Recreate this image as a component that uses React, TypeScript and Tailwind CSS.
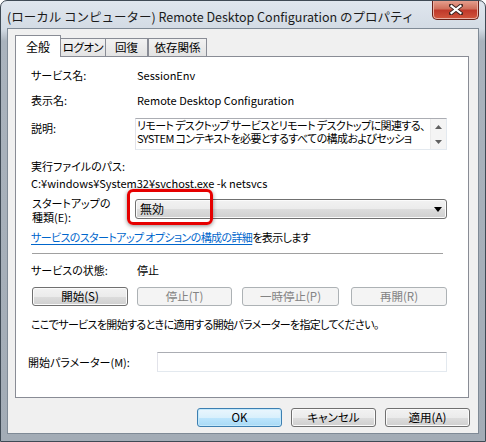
import React from 'react';

// ダイアログ全体のフォント
const jp = "font-['Noto_Sans_CJK_JP','Noto_Sans',sans-serif] [font-feature-settings:'palt']";

function Btn({ label, kind = 'normal', className = '' }: { label: string; kind?: 'normal' | 'disabled' | 'focused'; className?: string }) {
  const look =
    kind === 'disabled'
      ? 'border-[#adb2b5] bg-[#f4f4f4] text-[#838383]'
      : kind === 'focused'
      ? 'border-[#3c7fb1] bg-[linear-gradient(#eaf6fd_0%,#d9f0fc_50%,#bee6fd_50%,#a7d9f5_100%)] shadow-[inset_0_0_0_1px_#c3e8fb] text-black'
      : 'border-[#707070] bg-[linear-gradient(#f2f2f2_0%,#ebebeb_50%,#dddddd_50%,#cfcfcf_100%)] shadow-[inset_0_0_0_1px_#fbfbfb] text-black';
  return (
    <div className={`h-[19px] rounded-[3px] border flex items-center justify-center text-[11.5px] leading-none whitespace-nowrap ${look} ${className}`}>
      {label}
    </div>
  );
}

function Tab({ label, active, w, className = '' }: { label: string; active?: boolean; w: string; className?: string }) {
  if (active) {
    return (
      <div className={`relative z-10 -mb-px h-[22px] ${w} border border-b-0 border-[#898c95] bg-white flex items-center justify-center text-[12px] whitespace-nowrap ${className}`}>
        {label}
      </div>
    );
  }
  return (
    <div className={`h-[18px] ${w} border border-b-0 border-[#898c95] bg-[linear-gradient(#f2f2f2,#e3e3e3)] flex items-center justify-center text-[11.5px] pt-px whitespace-nowrap ${className}`}>
      {label}
    </div>
  );
}

export default function App() {
  return (
    <div className={`w-[486px] h-[442px] border border-[#3f4a55] rounded-t-[7px] bg-[linear-gradient(#dfe6ee_0px,#d3dbe4_28px,#aab3bd_40px,#a3acb6_100%)] flex flex-col overflow-hidden ${jp}`}>
      {/* タイトルバー */}
      <div className="h-[27px] flex items-start shrink-0">
        <div className="pl-[6px] pt-[8px] text-[12.5px] leading-[16px] text-[#1b1b1b] whitespace-nowrap [font-feature-settings:normal]">
          (ローカル コンピューター) Remote Desktop Configuration のプロパティ
        </div>
        <div className="ml-auto mr-[6px] -mt-px w-[47px] h-[20px] rounded-b-[5px] border border-t-0 border-[#6b2219] bg-[linear-gradient(#e8a493_0%,#d0715d_45%,#c0392b_55%,#d2563d_100%)] shadow-[inset_0_0_0_1px_#eab0a4] flex items-center justify-center">
          <svg width="14" height="11" viewBox="0 0 14 11">
            <path d="M2 1.5 L12 9.5 M12 1.5 L2 9.5" stroke="#3d2420" strokeWidth="4" strokeLinecap="square" />
            <path d="M2.5 2 L11.5 9 M11.5 2 L2.5 9" stroke="#ffffff" strokeWidth="2.2" strokeLinecap="square" />
          </svg>
        </div>
      </div>

      {/* クライアント領域 */}
      <div className="mx-[6px] h-[406px] shrink-0 border border-[#7f8a96] bg-[#f0f0f0] flex flex-col text-black">
        {/* タブ */}
        <div className="mt-[6px] h-[21px] pl-[7px] flex items-end">
          <Tab label="全般" active w="w-[46px]" />
          <Tab label="ログオン" w="w-[46px]" className="-ml-px tracking-[-0.5px]" />
          <Tab label="回復" w="w-[43px]" className="-ml-px" />
          <Tab label="依存関係" w="w-[59px]" />
        </div>

        {/* タブの中身 */}
        <div className="ml-[7px] w-[454px] h-[342px] border border-[#898c95] bg-white pl-[15px] flex flex-col text-[11px]">
          <div className="mt-[10px] h-[16px] flex items-center">
            <div className="w-[106px]">サービス名:</div>
            <div>SessionEnv</div>
          </div>
          <div className="mt-[9px] h-[16px] flex items-center">
            <div className="w-[106px]">表示名:</div>
            <div>Remote Desktop Configuration</div>
          </div>
          <div className="mt-[10px] h-[32px] flex">
            <div className="w-[104px] pt-[2px] leading-[16px]">説明:</div>
            <div className="w-[312px] h-[32px] border border-[#abadb3] border-r-[#e3e9ef] border-b-[#e3e9ef] border-l-[#e2e3ea] flex">
              <div className="flex-1 pl-px leading-[13px] whitespace-nowrap tracking-[-0.6px]">
                <div>リモート デスクトップ サービスとリモート デスクトップに関連する、</div>
                <div>SYSTEM コンテキストを必要とするすべての構成およびセッショ</div>
              </div>
              <div className="w-[16px] flex flex-col bg-[#f4f4f4] border-l border-[#eaeaea]">
                <div className="h-[15px] flex items-center justify-center">
                  <svg width="7" height="4" viewBox="0 0 7 4"><path d="M0 4 L3.5 0 L7 4 Z" fill="#606060" /></svg>
                </div>
                <div className="h-[15px] flex items-center justify-center">
                  <svg width="7" height="4" viewBox="0 0 7 4"><path d="M0 0 L3.5 4 L7 0 Z" fill="#606060" /></svg>
                </div>
              </div>
            </div>
          </div>
          <div className="mt-[8px] h-[16px] flex items-center">実行ファイルのパス:</div>
          <div className="mt-px h-[16px] flex items-center">C:¥windows¥System32¥svchost.exe -k netsvcs</div>

          <div className="mt-[5px] h-[28px] flex">
            <div className="w-[104px] leading-[14px] pl-px">
              <div>スタートアップの</div>
              <div>種類(E):</div>
            </div>
            <div className="relative mt-[3px] w-[312px] h-[20px]">
              <div className="w-full h-full rounded-[3px] border border-[#707070] bg-[linear-gradient(#f2f2f2_0%,#ebebeb_50%,#dddddd_50%,#cfcfcf_100%)] shadow-[inset_0_0_0_1px_#fbfbfb] flex items-center pl-[4px] pr-[4px] text-[12px]">
                <span>無効</span>
                <svg className="ml-auto" width="8" height="5" viewBox="0 0 8 5"><path d="M0 0 L8 0 L4 5 Z" fill="#000" /></svg>
              </div>
              {/* 赤い強調枠 */}
              <div className="absolute left-[-8px] top-[-10px] w-[86px] h-[36px] rounded-[6px] border-[3px] border-[#e60000] shadow-[0_1px_4px_rgba(0,0,0,0.45)]" />
            </div>
          </div>

          <div className="mt-[5px] h-[16px] flex items-center whitespace-nowrap tracking-[-0.6px]">
            <span className="text-[#0066cc] underline underline-offset-2">サービスのスタートアップ オプションの構成の詳細</span>
            <span>を表示します</span>
          </div>
          <div className="mt-[8px] ml-px h-px w-[411px] bg-[#a0a0a0]" />
          <div className="mt-[8px] h-[16px] flex items-center">
            <div className="w-[106px]">サービスの状態:</div>
            <div>停止</div>
          </div>
          <div className="mt-[9px] ml-px flex">
            <Btn label="開始(S)" className="w-[96px]" />
            <Btn label="停止(T)" kind="disabled" className="w-[95px] ml-[9px]" />
            <Btn label="一時停止(P)" kind="disabled" className="w-[97px] ml-[10px]" />
            <Btn label="再開(R)" kind="disabled" className="w-[96px] ml-[12px]" />
          </div>
          <div className="mt-[10px] h-[16px] flex items-center whitespace-nowrap tracking-[-0.65px]">
            ここでサービスを開始するときに適用する開始パラメーターを指定してください。
          </div>
          <div className="mt-[20px] h-[20px] flex items-center -ml-[3px]">
            <div className="w-[129px]">開始パラメーター(M):</div>
            <div className="w-[290px] h-[20px] border border-[#abadb3] border-r-[#e3e9ef] border-b-[#e3e9ef] border-l-[#e2e3ea] bg-white" />
          </div>
        </div>

        {/* 下のボタン */}
        <div className="mt-[10px] pr-[8px] flex justify-end gap-[9px]">
          <Btn label="OK" kind="focused" className="w-[85px]" />
          <Btn label="キャンセル" className="w-[85px]" />
          <Btn label="適用(A)" className="w-[85px]" />
        </div>
      </div>
    </div>
  );
}
